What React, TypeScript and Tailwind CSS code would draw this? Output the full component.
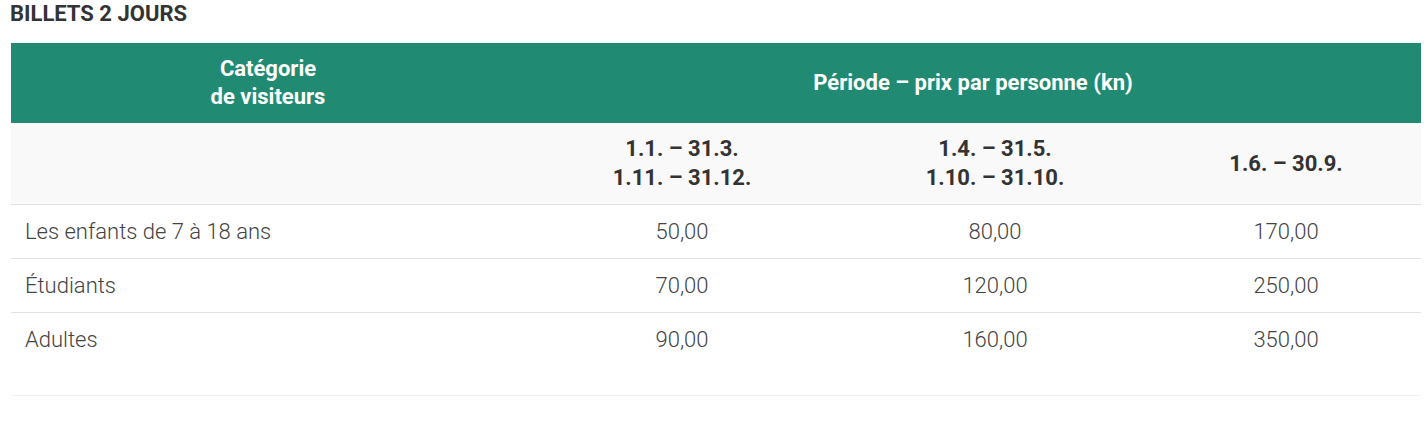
import React from 'react';

const rows = [
  { label: 'Les enfants de 7 à 18 ans', prices: ['50,00', '80,00', '170,00'] },
  { label: 'Étudiants', prices: ['70,00', '120,00', '250,00'] },
  { label: 'Adultes', prices: ['90,00', '160,00', '350,00'] },
];

const App: React.FC = () => {
  return (
    <div className="min-h-screen bg-white font-['Roboto',sans-serif] text-[#333]">
      <h2 className="pl-[10px] pt-[1px] text-[22px] leading-[26px] font-bold text-[#333]">
        BILLETS 2 JOURS
      </h2>

      <div className="mx-[11px] mt-[16px] w-[1410px]">
        <table className="w-full border-collapse table-fixed">
          <colgroup>
            <col className="w-[514px]" />
            <col className="w-[314px]" />
            <col className="w-[312px]" />
            <col className="w-[270px]" />
          </colgroup>
          <thead>
            <tr className="h-[80px] bg-[#218a72] text-white">
              <th className="text-center text-[22px] leading-[28px] font-bold">
                Catégorie
                <br />
                de visiteurs
              </th>
              <th colSpan={3} className="text-center text-[22px] leading-[28px] font-bold">
                Période – prix par personne (kn)
              </th>
            </tr>
            <tr className="h-[81px] bg-[#f9f9f9] border-b border-[#e2e2e2]">
              <th />
              <th className="text-center text-[22px] leading-[29px] font-bold text-[#333]">
                1.1. – 31.3.
                <br />
                1.11. – 31.12.
              </th>
              <th className="text-center text-[22px] leading-[29px] font-bold text-[#333]">
                1.4. – 31.5.
                <br />
                1.10. – 31.10.
              </th>
              <th className="text-center text-[22px] leading-[29px] font-bold text-[#333]">
                1.6. – 30.9.
              </th>
            </tr>
          </thead>
          <tbody>
            {rows.map((r, i) => (
              <tr
                key={r.label}
                className={i < rows.length - 1 ? 'h-[54px] border-b border-[#e2e2e2]' : 'h-[54px]'}
              >
                <td className="pl-[14px] text-[22px] font-light text-[#444]">{r.label}</td>
                {r.prices.map((p) => (
                  <td key={p} className="text-center text-[22px] font-light text-[#444]">
                    {p}
                  </td>
                ))}
              </tr>
            ))}
          </tbody>
        </table>
        <div className="h-[30px] border-b border-[#f3f3f3]" />
      </div>
    </div>
  );
};

export default App;
